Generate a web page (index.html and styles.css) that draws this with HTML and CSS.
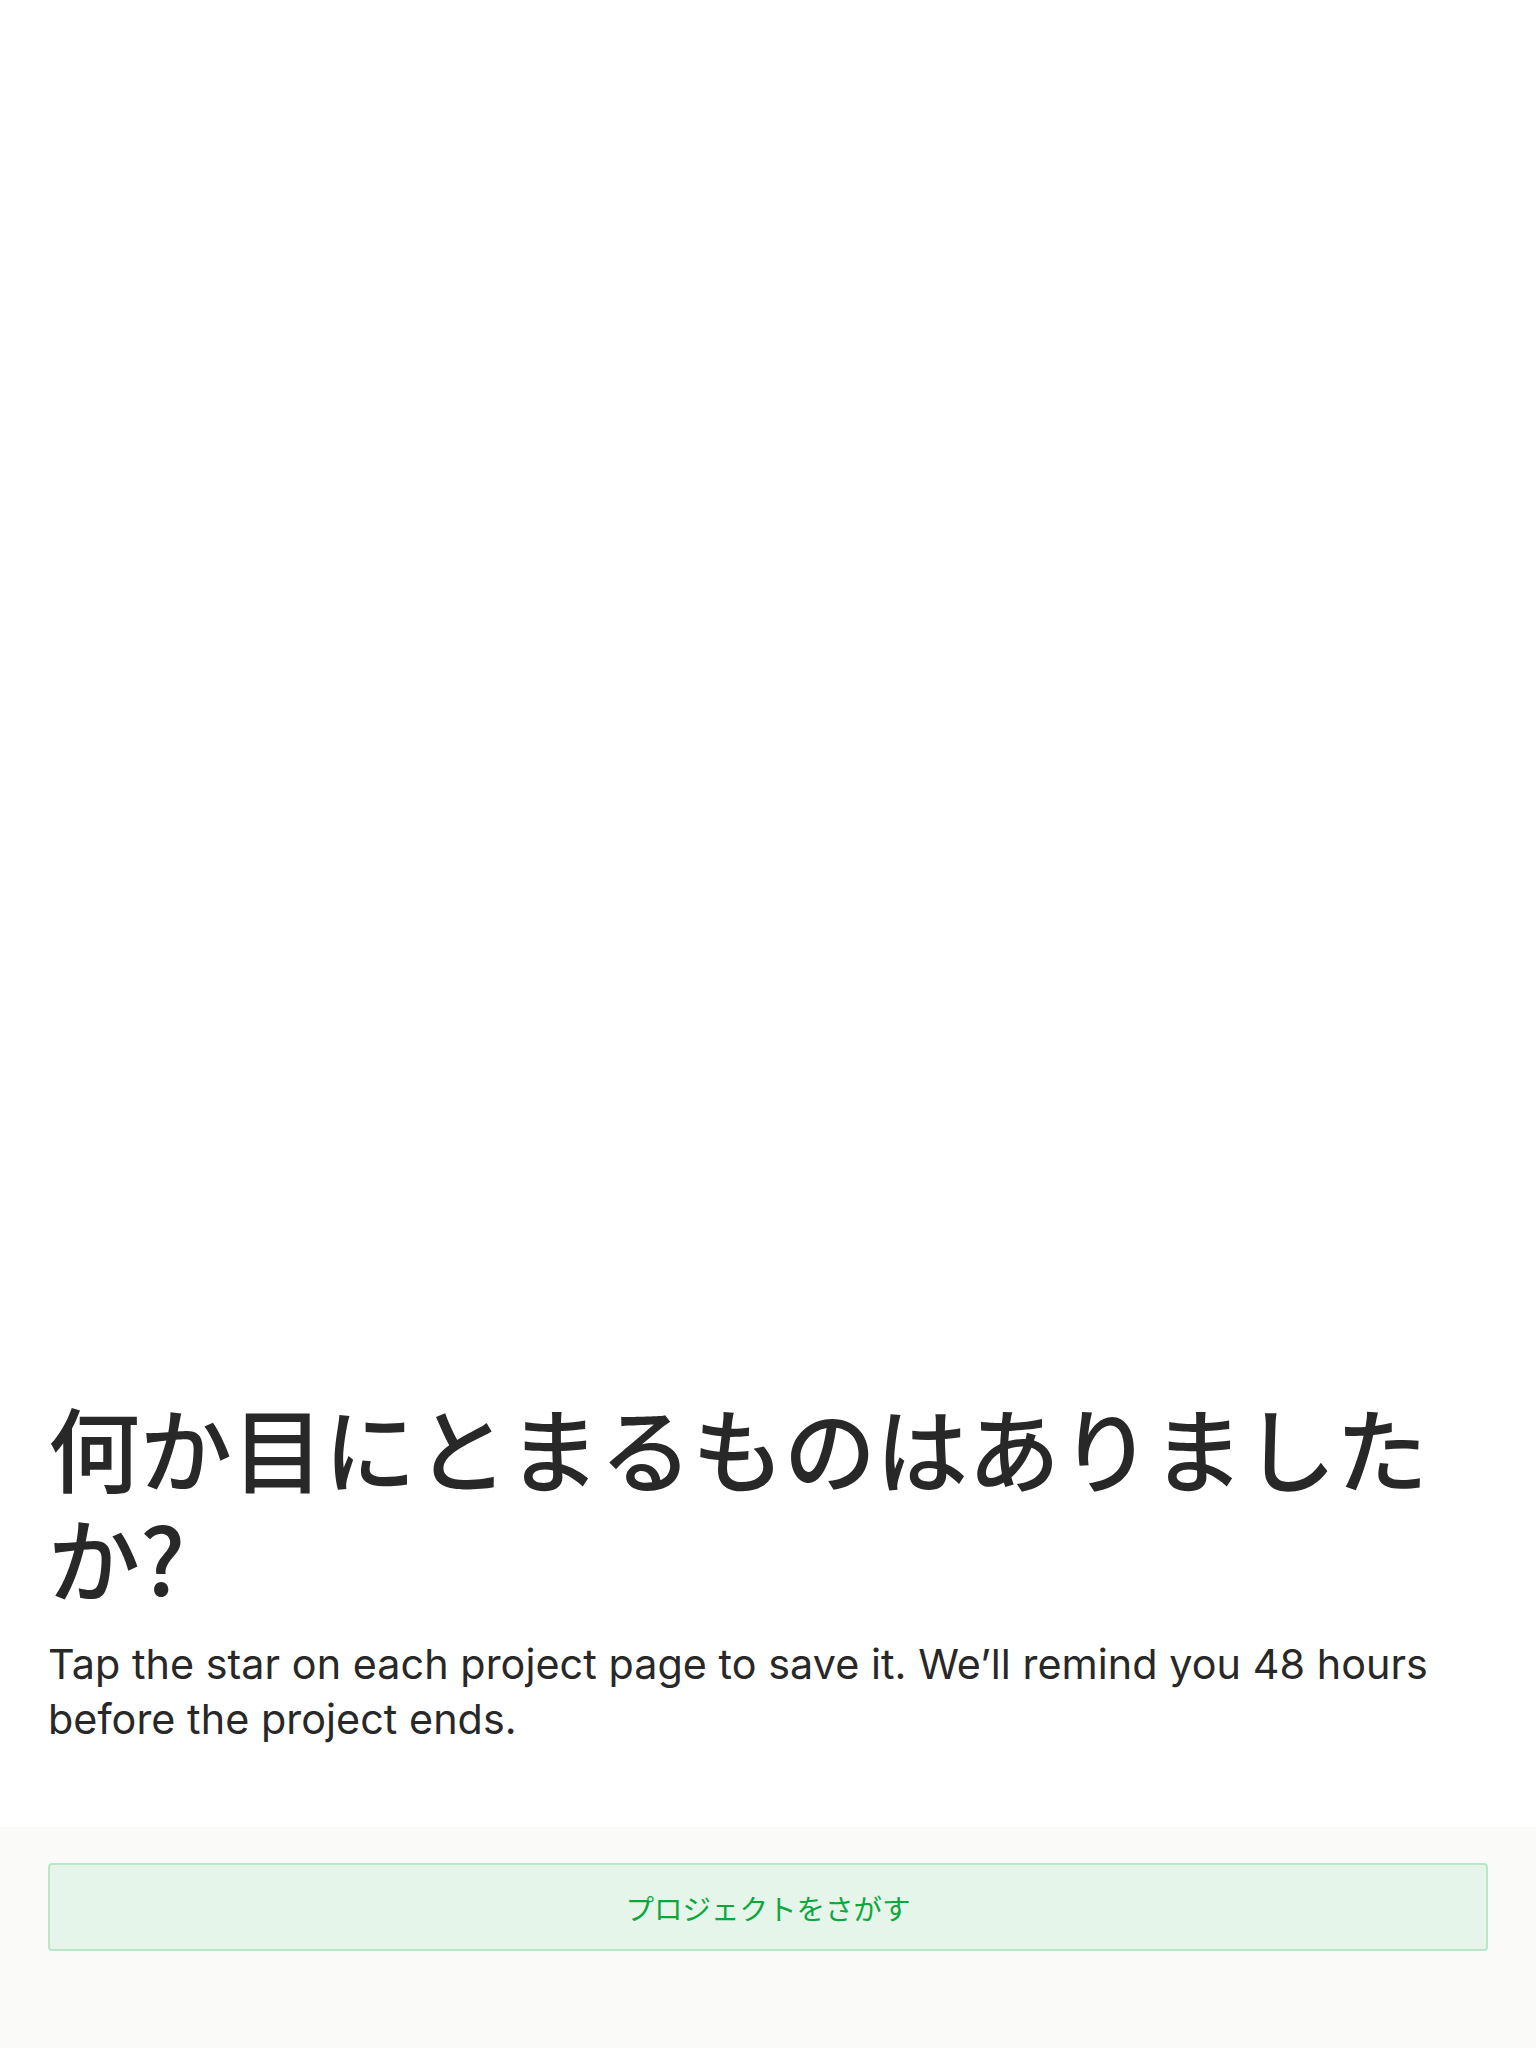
FILE: index.html
```
<!DOCTYPE html>
<html lang="ja">
<head>
<meta charset="utf-8">
<link rel="stylesheet" href="styles.css">
</head>
<body>
<div class="page">
  <main class="content">
    <h1 class="title">何か目にとまるものはありましたか?</h1>
    <p class="desc">Tap the star on each project page to save it. We’ll remind you 48 hours before the project ends.</p>
  </main>
  <footer class="footer">
    <button class="explore-btn" type="button">プロジェクトをさがす</button>
  </footer>
</div>
</body>
</html>
```
FILE: styles.css
```
html, body {
  margin: 0;
  padding: 0;
  background: #ffffff;
}
.page {
  height: 2048px;
  display: flex;
  flex-direction: column;
}
.content {
  flex: 1;
  display: flex;
  flex-direction: column;
  justify-content: flex-end;
  padding: 0 48px 80px 48px;
}
.title {
  margin: 0 0 26px 0;
  font-family: "Noto Sans CJK JP", "Inter", sans-serif;
  font-weight: 500;
  font-size: 92px;
  line-height: 110px;
  color: #282828;
}
.desc {
  margin: 0;
  font-family: "Inter", "Liberation Sans", sans-serif;
  font-size: 41.3px;
  line-height: 55px;
  letter-spacing: 0.05px;
  color: #282828;
}
.footer {
  background: #fafaf9;
  padding: 36px 48px 97px 48px;
}
.explore-btn {
  display: block;
  width: 100%;
  height: 88px;
  background: #e5f5ea;
  border: 2px solid #b9e7c8;
  border-radius: 4px;
  color: #0da73e;
  font-family: "Noto Sans CJK JP", sans-serif;
  font-size: 28.5px;
  font-weight: 400;
  padding: 0;
  cursor: pointer;
}
```
